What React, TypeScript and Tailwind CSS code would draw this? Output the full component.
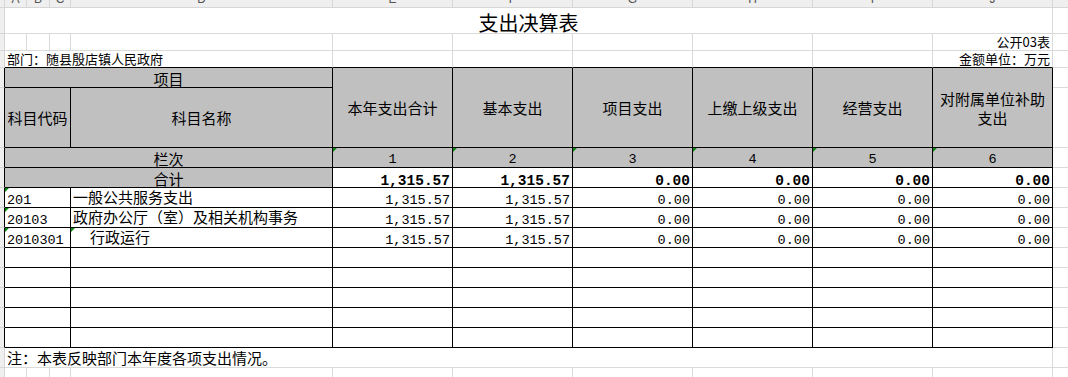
import React from "react";

const GRAY = "border-r border-b border-[#dadada]";
const BLACK = "border-r border-b border-black";
const ABOVE = "border-r border-b border-r-[#dadada] border-b-black";
const RH = "bg-[#efefef] border-r border-b border-[#d6d6d6]";
const RH_T = "bg-[#efefef] border-r border-b border-b-[#d6d6d6] border-r-black";
const MONO = "font-['Liberation_Mono',monospace]";

function Tri() {
  return (
    <span className="absolute left-0 top-0 h-0 w-0 border-t-[4px] border-r-[4px] border-t-[#0a8a0a] border-r-transparent" />
  );
}

const cols = ["E", "F", "G", "H", "I", "J"];
const heads = ["本年支出合计", "基本支出", "项目支出", "上缴上级支出", "经营支出", "对附属单位补助支出"];

type Row = { code: string; name: string; indent?: boolean; vals: string[] };
const rows: Row[] = [
  { code: "201", name: "一般公共服务支出", vals: ["1,315.57", "1,315.57", "0.00", "0.00", "0.00", "0.00"] },
  { code: "20103", name: "政府办公厅（室）及相关机构事务", vals: ["1,315.57", "1,315.57", "0.00", "0.00", "0.00", "0.00"] },
  { code: "2010301", name: "行政运行", indent: true, vals: ["1,315.57", "1,315.57", "0.00", "0.00", "0.00", "0.00"] },
];

function Num({ v, bold }: { v: string; bold?: boolean }) {
  return (
    <div className={BLACK + " flex items-end justify-end pr-[2px] pb-[1px]"}>
      <span className={bold ? MONO + " text-[14.5px] leading-[10px] font-bold" : MONO + " text-[13.5px] leading-[10px]"}>{v}</span>
    </div>
  );
}

export default function App() {
  const letters = ["A", "B", "C", "D", "E", "F", "G", "H", "I", "J"];
  return (
    <div className="w-[1068px] h-[377px] overflow-hidden bg-white text-black font-['Noto_Sans_CJK_SC',sans-serif]">
      <div className="grid grid-cols-[5px_22px_23px_21px_262px_repeat(6,120px)_1fr] grid-rows-[8px_26px_17px_17px_20px_60px_repeat(12,20px)]">
        {/* row 0: column header strip */}
        <div className="bg-[#efefef] border-r border-b border-[#d6d6d6]" />
        {letters.map((l) => (
          <div key={l} className="bg-[#efefef] border-r border-b border-[#d6d6d6] flex justify-center items-start overflow-hidden">
            <span className="font-['Liberation_Sans',sans-serif] text-[12px] leading-[12px] -mt-[7px] text-[#555]">{l}</span>
          </div>
        ))}
        <div className="bg-[#efefef] border-b border-[#d6d6d6]" />

        {/* row 1: title */}
        <div className={RH} />
        <div className={GRAY + " col-span-10 flex items-end justify-center"}>
          <span className="text-[20px] leading-[20px]">支出决算表</span>
        </div>
        <div className="border-b border-[#dadada]" />

        {/* row 2 */}
        <div className={RH} />
        {letters.slice(0, 9).map((l) => (
          <div key={l} className={GRAY} />
        ))}
        <div className={GRAY + " flex items-end justify-end pr-[2px] pb-[2px]"}>
          <span className="text-[13px] leading-[13px]">公开03表</span>
        </div>
        <div className="border-b border-[#dadada]" />

        {/* row 3 */}
        <div className={RH} />
        <div className={ABOVE + " col-span-4 flex items-end pl-[2px] pb-[2px]"}>
          <span className="text-[13px] leading-[13px]">部门：随县殷店镇人民政府</span>
        </div>
        {letters.slice(4, 9).map((l) => (
          <div key={l} className={ABOVE} />
        ))}
        <div className={ABOVE + " flex items-end justify-end pr-[2px] pb-[2px]"}>
          <span className="text-[13px] leading-[13px]">金额单位：万元</span>
        </div>
        <div className="border-b border-[#dadada]" />

        {/* row 4 */}
        <div className={RH_T} />
        <div className={BLACK + " col-span-4 bg-[#c0c0c0] flex items-center justify-center text-[15px] leading-[15px] pt-[1px]"}>项目</div>
        {heads.map((h, i) => (
          <div key={i} className={BLACK + " row-span-2 bg-[#c0c0c0] flex items-center justify-center text-center text-[15px] leading-[19px] px-[2px]"}>
            <span>{h}</span>
          </div>
        ))}
        <div className="border-b border-[#dadada]" />

        {/* row 5 */}
        <div className={RH_T} />
        <div className={BLACK + " col-span-3 bg-[#c0c0c0] flex items-center justify-center text-[15px] leading-[15px]"}>科目代码</div>
        <div className={BLACK + " bg-[#c0c0c0] flex items-center justify-center text-[15px] leading-[15px]"}>科目名称</div>
        <div className="border-b border-[#dadada]" />

        {/* row 6 */}
        <div className={RH_T} />
        <div className={BLACK + " col-span-4 bg-[#c0c0c0] flex items-center justify-center text-[15px] leading-[15px] pt-[1px]"}>栏次</div>
        {cols.map((c, i) => (
          <div key={c} className={BLACK + " relative bg-[#c0c0c0] flex items-center justify-center pt-[3px]"}>
            <Tri />
            <span className={MONO + " text-[13.5px] leading-[13px]"}>{i + 1}</span>
          </div>
        ))}
        <div className="border-b border-[#dadada]" />

        {/* row 7 */}
        <div className={RH_T} />
        <div className={BLACK + " col-span-4 bg-[#c0c0c0] flex items-center justify-center text-[15px] leading-[15px] pt-[1px]"}>合计</div>
        {["1,315.57", "1,315.57", "0.00", "0.00", "0.00", "0.00"].map((v, i) => (
          <Num key={i} v={v} bold />
        ))}
        <div className="border-b border-[#dadada]" />

        {/* data rows */}
        {rows.map((r) => (
          <React.Fragment key={r.code}>
            <div className={RH_T} />
            <div className={BLACK + " col-span-3 relative flex items-end pl-[2px] pb-[1px]"}>
              <Tri />
              <span className={MONO + " text-[13.5px] leading-[10px]"}>{r.code}</span>
            </div>
            <div className={BLACK + " relative flex items-end pb-[3px] " + (r.indent ? "pl-[19px]" : "pl-[2px]")}>
              {r.indent ? <Tri /> : null}
              <span className="text-[15px] leading-[15px] whitespace-nowrap">{r.name}</span>
            </div>
            {r.vals.map((v, i) => (
              <Num key={i} v={v} />
            ))}
            <div className="border-b border-[#dadada]" />
          </React.Fragment>
        ))}

        {/* empty rows */}
        {[0, 1, 2, 3, 4].map((k) => (
          <React.Fragment key={"e" + k}>
            <div className={RH_T} />
            <div className={BLACK + " col-span-3"} />
            <div className={BLACK} />
            {cols.map((c) => (
              <div key={c} className={BLACK} />
            ))}
            <div className="border-b border-[#dadada]" />
          </React.Fragment>
        ))}

        {/* note row */}
        <div className={RH} />
        <div className={GRAY + " col-span-10 flex items-center pl-[2px]"}>
          <span className="text-[15px] leading-[15px]">注：本表反映部门本年度各项支出情况。</span>
        </div>
        <div className="border-b border-[#dadada]" />

        {/* last row */}
        <div className={RH} />
        {letters.map((l) => (
          <div key={l} className={GRAY} />
        ))}
        <div className="border-b border-[#dadada]" />
      </div>
    </div>
  );
}
